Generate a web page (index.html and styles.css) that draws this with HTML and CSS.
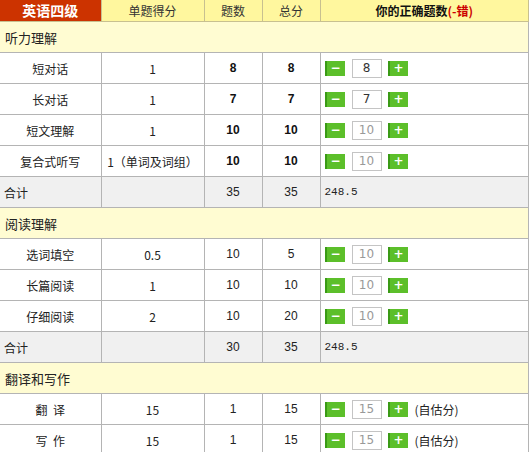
FILE: index.html
```html
<!DOCTYPE html>
<html lang="zh">
<head>
<meta charset="utf-8">
<link rel="stylesheet" href="styles.css">
</head>
<body>
<table class="score">
  <colgroup>
    <col class="c1"><col class="c2"><col class="c3"><col class="c4"><col class="c5">
  </colgroup>
  <thead>
    <tr>
      <th class="level">英语四级</th>
      <th>单题得分</th>
      <th>题数</th>
      <th><span class="total-h">总分</span></th>
      <th>你的正确题数<span class="err">(-错)</span></th>
    </tr>
  </thead>
  <tbody>
    <tr class="section"><td colspan="5">听力理解</td></tr>
    <tr><td>短对话</td><td>1</td><td class="b">8</td><td class="b">8</td><td class="ctl"><span class="btn">&minus;</span><span class="inp dark">8</span><span class="btn">+</span></td></tr>
    <tr><td>长对话</td><td>1</td><td class="b">7</td><td class="b">7</td><td class="ctl"><span class="btn">&minus;</span><span class="inp dark">7</span><span class="btn">+</span></td></tr>
    <tr><td>短文理解</td><td>1</td><td class="b">10</td><td class="b">10</td><td class="ctl"><span class="btn">&minus;</span><span class="inp">10</span><span class="btn">+</span></td></tr>
    <tr><td>复合式听写</td><td>1（单词及词组）</td><td class="b">10</td><td class="b">10</td><td class="ctl"><span class="btn">&minus;</span><span class="inp">10</span><span class="btn">+</span></td></tr>
    <tr class="sum"><td class="l">合计</td><td></td><td>35</td><td>35</td><td class="l">248.5</td></tr>
    <tr class="section"><td colspan="5">阅读理解</td></tr>
    <tr><td>选词填空</td><td>0.5</td><td>10</td><td>5</td><td class="ctl"><span class="btn">&minus;</span><span class="inp">10</span><span class="btn">+</span></td></tr>
    <tr><td>长篇阅读</td><td>1</td><td>10</td><td>10</td><td class="ctl"><span class="btn">&minus;</span><span class="inp">10</span><span class="btn">+</span></td></tr>
    <tr><td>仔细阅读</td><td>2</td><td>10</td><td>20</td><td class="ctl"><span class="btn">&minus;</span><span class="inp">10</span><span class="btn">+</span></td></tr>
    <tr class="sum"><td class="l">合计</td><td></td><td>30</td><td>35</td><td class="l">248.5</td></tr>
    <tr class="section"><td colspan="5">翻译和写作</td></tr>
    <tr><td>翻&nbsp;&nbsp;译</td><td>15</td><td>1</td><td>15</td><td class="ctl"><span class="btn">&minus;</span><span class="inp">15</span><span class="btn">+</span><span class="note">(自估分)</span></td></tr>
    <tr><td>写&nbsp;&nbsp;作</td><td>15</td><td>1</td><td>15</td><td class="ctl"><span class="btn">&minus;</span><span class="inp">15</span><span class="btn">+</span><span class="note">(自估分)</span></td></tr>
  </tbody>
</table>
</body>
</html>
```
FILE: styles.css
```css
html, body {
  margin: 0;
  padding: 0;
  background: #ffffff;
}
body {
  font-family: "Noto Sans CJK SC", "DejaVu Sans", sans-serif;
  font-size: 12px;
  color: #222;
}
.score {
  border-collapse: collapse;
  table-layout: fixed;
  width: 529px;
}
.c1 { width: 101px; }
.c2 { width: 103px; }
.c3 { width: 58px; }
.c4 { width: 58px; }
.c5 { width: auto; }
.score th {
  height: 21px;
  padding: 0;
  background: #fff79e;
  border: 1px solid #c8c090;
  border-top: none;
  font-weight: normal;
  font-size: 12px;
  color: #333;
  line-height: 21px;
}
.score th.level {
  background: #cc3300;
  color: #fff;
  font-weight: bold;
  font-size: 14px;
  border-left: none;
}
.score th:last-child { font-weight: bold; color: #111; }
.total-h { color: #333; }
.err { color: #cc0000; font-weight: bold; }
.score td {
  height: 30px;
  padding: 0;
  border: 1px solid #b4b4b4;
  text-align: center;
  vertical-align: middle;
  font-family: "Noto Sans CJK SC", "DejaVu Sans", sans-serif;
  font-size: 12px;
}
.score td:first-child { border-left: none; }
.score td:nth-child(3), .score td:nth-child(4) { font-family: "Liberation Sans", sans-serif; font-size: 12px; }
.score td.b { font-weight: bold; color: #111; }
.section td {
  background: #fffcd2;
  text-align: left;
  padding-left: 5px;
  font-size: 13px;
}
.sum td { background: #f0f0f0; }
.sum td.l { text-align: left; padding-left: 4px; }
.sum td:last-child { font-family: "Liberation Mono", monospace; font-size: 11px; }
.score td.ctl {
  text-align: left;
  padding-left: 4px;
}
.ctl { white-space: nowrap; }
.btn {
  display: inline-block;
  vertical-align: middle;
  width: 18px;
  height: 15px;
  background: #5cbf2a;
  border-left: 2px solid #3a9a16;
  color: #fff;
  font-weight: bold;
  font-size: 12px;
  line-height: 15px;
  text-align: center;
  font-family: "DejaVu Sans", sans-serif;
}
.inp {
  display: inline-block;
  vertical-align: middle;
  box-sizing: border-box;
  width: 30px;
  height: 19px;
  margin: 0 6px 0 7px;
  border: 1px solid #c4c4c4;
  color: #999;
  font-family: "DejaVu Sans", sans-serif;
  font-size: 12px;
  line-height: 17px;
  text-align: center;
}
.inp.dark { color: #333; }
.note {
  display: inline-block;
  vertical-align: middle;
  margin-left: 7px;
  font-size: 12px;
  color: #222;
}
```
